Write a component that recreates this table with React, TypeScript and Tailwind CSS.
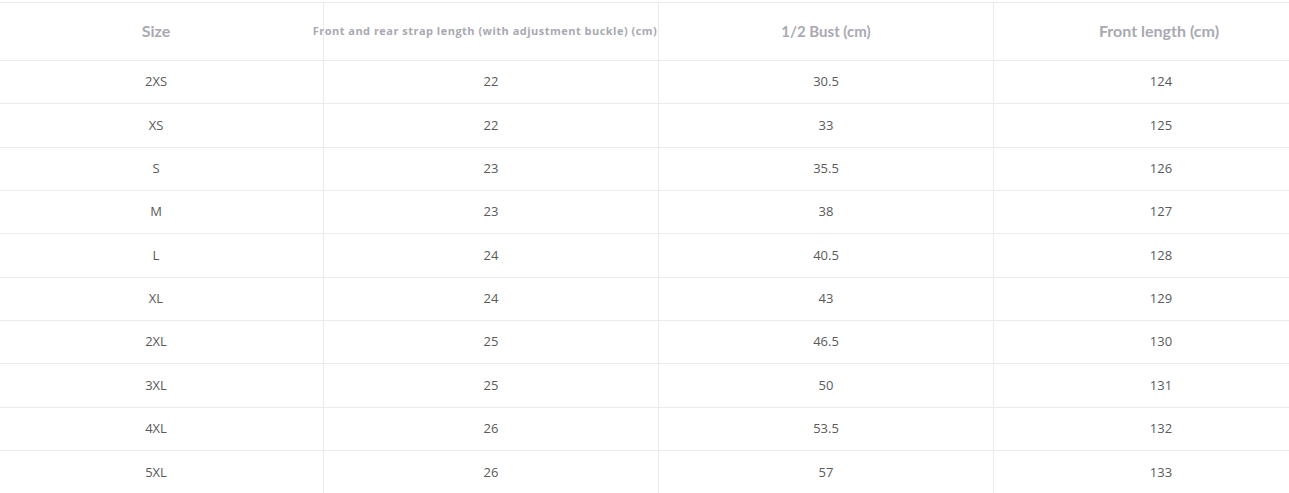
const headers = [
  { label: 'Size', className: "text-[16px] font-bold font-['Lato',sans-serif]" },
  {
    label: 'Front and rear strap length (with adjustment buckle) (cm)',
    className: "text-[11px] font-bold tracking-[0.48px] whitespace-nowrap pr-[12px] font-['Open_Sans',sans-serif]",
  },
  { label: '1/2 Bust (cm)', className: "text-[15px] font-bold font-['Lato',sans-serif]" },
  { label: 'Front length (cm)', className: "text-[16px] font-bold font-['Lato',sans-serif] pr-[4px]" },
]

const rows = [
  ['2XS', '22', '30.5', '124'],
  ['XS', '22', '33', '125'],
  ['S', '23', '35.5', '126'],
  ['M', '23', '38', '127'],
  ['L', '24', '40.5', '128'],
  ['XL', '24', '43', '129'],
  ['2XL', '25', '46.5', '130'],
  ['3XL', '25', '50', '131'],
  ['4XL', '26', '53.5', '132'],
  ['5XL', '26', '57', '133'],
]

export default function App() {
  return (
    <div className="w-[1289px] h-[493px] overflow-hidden bg-white pt-[2px]">
      <table className="-ml-[12px] w-[1341px] table-fixed border-collapse">
        <thead>
          <tr className="h-[58px]">
            {headers.map((h) => (
              <th
                key={h.label}
                className="border border-[#ebebeb] p-0 text-center align-middle text-[#a9a9b1]"
              >
                <div className={`flex justify-center pb-[1px] ${h.className}`}>{h.label}</div>
              </th>
            ))}
          </tr>
        </thead>
        <tbody>
          {rows.map((r, i) => (
            <tr key={i} className="h-[43.35px]">
              {r.map((c, j) => (
                <td
                  key={j}
                  className="border border-[#ebebeb] p-0 text-center align-middle font-['Open_Sans',sans-serif] text-[13px] text-[#5a5a5a]"
                >
                  {c}
                </td>
              ))}
            </tr>
          ))}
        </tbody>
      </table>
    </div>
  )
}
